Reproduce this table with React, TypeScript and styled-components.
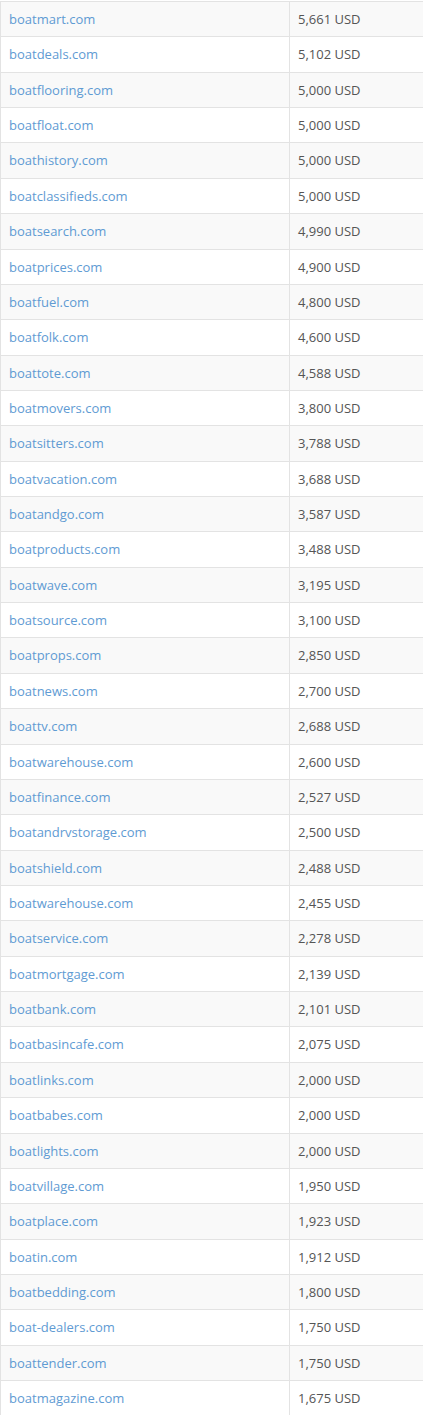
import styled, { createGlobalStyle } from 'styled-components';

const GlobalStyle = createGlobalStyle`
  html, body {
    margin: 0;
    padding: 0;
    background: #fff;
    overflow: hidden;
  }
  body {
    font-family: 'Open Sans', 'Liberation Sans', sans-serif;
  }
`;

const Wrapper = styled.div`
  padding-top: 1px;
  width: 423px;
`;

const PriceTable = styled.table`
  border-collapse: collapse;
  width: 100%;
  font-size: 13px;
`;

const Row = styled.tr<{ $striped: boolean }>`
  background-color: ${(p) => (p.$striped ? '#f9f9f9' : '#ffffff')};
`;

const Cell = styled.td`
  padding: 8px;
  line-height: 18.36px;
  border: 1px solid #e3e3e3;
  border-right: none;
  color: #555;
  vertical-align: top;
`;

const NameCell = styled(Cell)`
  width: 272px;
  border-right: 1px solid #e3e3e3;
`;

const DomainLink = styled.a`
  color: #5f9bd3;
  text-decoration: none;
`;

const domains: [string, string][] = [
  ['boatmart.com', '5,661'],
  ['boatdeals.com', '5,102'],
  ['boatflooring.com', '5,000'],
  ['boatfloat.com', '5,000'],
  ['boathistory.com', '5,000'],
  ['boatclassifieds.com', '5,000'],
  ['boatsearch.com', '4,990'],
  ['boatprices.com', '4,900'],
  ['boatfuel.com', '4,800'],
  ['boatfolk.com', '4,600'],
  ['boattote.com', '4,588'],
  ['boatmovers.com', '3,800'],
  ['boatsitters.com', '3,788'],
  ['boatvacation.com', '3,688'],
  ['boatandgo.com', '3,587'],
  ['boatproducts.com', '3,488'],
  ['boatwave.com', '3,195'],
  ['boatsource.com', '3,100'],
  ['boatprops.com', '2,850'],
  ['boatnews.com', '2,700'],
  ['boattv.com', '2,688'],
  ['boatwarehouse.com', '2,600'],
  ['boatfinance.com', '2,527'],
  ['boatandrvstorage.com', '2,500'],
  ['boatshield.com', '2,488'],
  ['boatwarehouse.com', '2,455'],
  ['boatservice.com', '2,278'],
  ['boatmortgage.com', '2,139'],
  ['boatbank.com', '2,101'],
  ['boatbasincafe.com', '2,075'],
  ['boatlinks.com', '2,000'],
  ['boatbabes.com', '2,000'],
  ['boatlights.com', '2,000'],
  ['boatvillage.com', '1,950'],
  ['boatplace.com', '1,923'],
  ['boatin.com', '1,912'],
  ['boatbedding.com', '1,800'],
  ['boat-dealers.com', '1,750'],
  ['boattender.com', '1,750'],
  ['boatmagazine.com', '1,675'],
];

function App() {
  return (
    <>
      <GlobalStyle />
      <Wrapper>
        <PriceTable>
          <tbody>
            {domains.map(([name, price], i) => (
              <Row key={name + i} $striped={i % 2 === 0}>
                <NameCell>
                  <DomainLink href="#">{name}</DomainLink>
                </NameCell>
                <Cell>{price} USD</Cell>
              </Row>
            ))}
          </tbody>
        </PriceTable>
      </Wrapper>
    </>
  );
}

export default App;
